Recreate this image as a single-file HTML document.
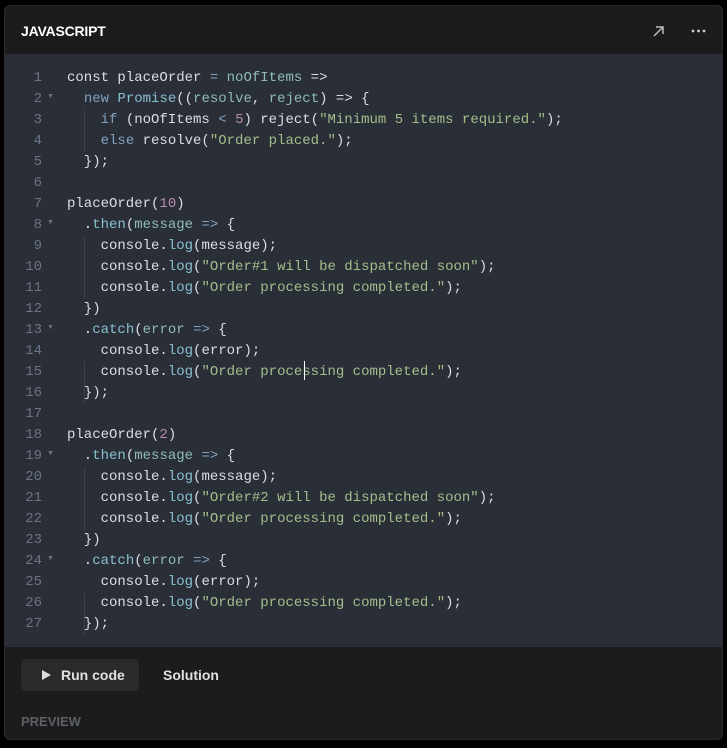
<!DOCTYPE html>
<html><head><meta charset="utf-8"><style>
body{margin:0;background:#000;width:727px;height:748px;overflow:hidden;font-family:"Liberation Sans",sans-serif}
.panel{position:absolute;left:4px;top:5px;width:719px;height:735px;background:#1c1c1c;border-radius:6px;overflow:hidden;border:1px solid #2a2a2a;box-sizing:border-box}
.hdr{height:48px;border-bottom:1px solid #2e2e2e;position:relative}
.hdr .t{position:absolute;left:16px;top:17px;color:#fff;font-weight:bold;font-size:14px;letter-spacing:-0.2px}
.code{position:absolute;top:48px;left:0;right:0;height:593px;background:#2a2e37}
pre{margin:0;font-family:"Liberation Mono",monospace;font-size:14px;line-height:21px;color:#d8dee9}
.lines{position:absolute;top:14px;left:62px}
.nums{position:absolute;top:14px;left:0;width:37px;text-align:right;color:#6b7385}
.k{color:#81a1c1}.f{color:#88c0d0}.p{color:#8fbcbb}.s{color:#a3be8c}.n{color:#b48ead}.o{color:#81a1c1}
.arr{position:absolute;color:#6b7385;font-size:7px;left:42px}
.g{position:absolute;width:1px;background:#3b4150}
.foot .btn{position:absolute;left:16px;top:653px;width:118px;height:32px;background:#2a2a2a;border-radius:5px}
.lbl{position:absolute;color:#e0e0e0;font-size:14px;font-weight:bold}
</style></head><body>
<div class="panel">
<div class="hdr"><div class="t">JAVASCRIPT</div>
<svg style="position:absolute;left:647px;top:18px" width="14" height="14" viewBox="0 0 14 14"><path d="M2 12L11 3M4 3h7v7" stroke="#bbb" stroke-width="1.5" fill="none"/></svg>
<svg style="position:absolute;left:686px;top:22px" width="16" height="6"><circle cx="2" cy="3" r="1.4" fill="#ccc"/><circle cx="7.5" cy="3" r="1.4" fill="#ccc"/><circle cx="13" cy="3" r="1.4" fill="#ccc"/></svg>
</div>
<div class="code">
<div class="g" style="left:79px;top:56px;height:42px"></div>
<div class="g" style="left:79px;top:182px;height:63px"></div>
<div class="g" style="left:79px;top:308px;height:42px"></div>
<div class="g" style="left:79px;top:413px;height:63px"></div>
<div class="g" style="left:79px;top:539px;height:42px"></div>
<pre class="nums">1
2
3
4
5
6
7
8
9
10
11
12
13
14
15
16
17
18
19
20
21
22
23
24
25
26
27</pre>
<span class="arr" style="top:39px">▼</span>
<span class="arr" style="top:165px">▼</span>
<span class="arr" style="top:270px">▼</span>
<span class="arr" style="top:396px">▼</span>
<span class="arr" style="top:501px">▼</span>
<pre class="lines">const placeOrder <span class="o">=</span> <span class="p">noOfItems</span> =&gt;
  <span class="k">new</span> <span class="f">Promise</span>((<span class="p">resolve</span>, <span class="p">reject</span>) =&gt; {
    <span class="k">if</span> (noOfItems <span class="o">&lt;</span> <span class="n">5</span>) reject(<span class="s">"Minimum 5 items required."</span>);
    <span class="k">else</span> resolve(<span class="s">"Order placed."</span>);
  });

placeOrder(<span class="n">10</span>)
  .<span class="f">then</span>(<span class="p">message</span> <span class="o">=&gt;</span> {
    console.<span class="f">log</span>(message);
    console.<span class="f">log</span>(<span class="s">"Order#1 will be dispatched soon"</span>);
    console.<span class="f">log</span>(<span class="s">"Order processing completed."</span>);
  })
  .<span class="f">catch</span>(<span class="p">error</span> <span class="o">=&gt;</span> {
    console.<span class="f">log</span>(error);
    console.<span class="f">log</span>(<span class="s">"Order processing completed."</span>);
  });

placeOrder(<span class="n">2</span>)
  .<span class="f">then</span>(<span class="p">message</span> <span class="o">=&gt;</span> {
    console.<span class="f">log</span>(message);
    console.<span class="f">log</span>(<span class="s">"Order#2 will be dispatched soon"</span>);
    console.<span class="f">log</span>(<span class="s">"Order processing completed."</span>);
  })
  .<span class="f">catch</span>(<span class="p">error</span> <span class="o">=&gt;</span> {
    console.<span class="f">log</span>(error);
    console.<span class="f">log</span>(<span class="s">"Order processing completed."</span>);
  });</pre>
<div style="position:absolute;left:299px;top:307px;width:1px;height:19px;background:#fff"></div>
</div>
<div class="foot">
<div class="btn"></div>
<svg style="position:absolute;left:37px;top:664px" width="9" height="10"><path d="M0 0L9 5L0 10Z" fill="#ddd"/></svg>
<div class="lbl" style="left:56px;top:661px">Run code</div>
<div class="lbl" style="left:158px;top:661px">Solution</div>
<div class="lbl" style="left:16px;top:708px;color:#5c6068;font-size:13px">PREVIEW</div>
</div>
</div>
</body></html>
